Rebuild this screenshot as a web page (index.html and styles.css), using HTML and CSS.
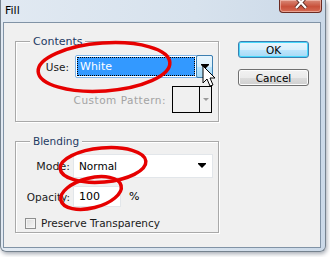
FILE: index.html
```html
<!DOCTYPE html>
<html>
<head>
<meta charset="utf-8">
<link rel="stylesheet" href="styles.css">
</head>
<body>
<div class="frame">
  <div class="titlebar">
    <span class="title">Fill</span>
    <div class="close">
      <svg width="14" height="10" viewBox="0 0 14 10"><path d="M2 -3 L12 8 M12 -3 L2 8" stroke="#5a2a22" stroke-width="4"/><path d="M2 -3 L12 8 M12 -3 L2 8" stroke="#fff" stroke-width="2.2"/></svg>
    </div>
  </div>
  <div class="client">
    <div class="groups">
      <div class="group contents">
        <div class="group-title">Contents</div>
        <div class="row use-row">
          <span class="label">Use:</span>
          <div class="combo focused">
            <div class="combo-value selected"><span>White</span></div>
            <div class="combo-btn"><span class="arrow"></span></div>
          </div>
        </div>
        <div class="row pattern-row">
          <span class="label disabled">Custom Pattern:</span>
          <div class="pattern">
            <div class="pattern-swatch"></div>
            <div class="pattern-btn"><span class="arrow small"></span></div>
          </div>
        </div>
      </div>
      <div class="group blending">
        <div class="group-title">Blending</div>
        <div class="row mode-row">
          <span class="label">Mode:</span>
          <div class="combo plain">
            <div class="combo-value"><span>Normal</span></div>
            <span class="arrow"></span>
          </div>
        </div>
        <div class="row opacity-row">
          <span class="label">Opacity:</span>
          <div class="input">100</div>
          <span class="pct">%</span>
        </div>
        <div class="row check-row">
          <span class="checkbox"></span>
          <span class="check-label">Preserve Transparency</span>
        </div>
      </div>
    </div>
    <div class="buttons">
      <div class="btn default">OK</div>
      <div class="btn">Cancel</div>
    </div>
  </div>
</div>
<svg class="marks" width="330" height="257" viewBox="0 0 330 257">
  <ellipse cx="104" cy="67" rx="66" ry="24" transform="rotate(-4 104 67)" fill="none" stroke="#e60000" stroke-width="3.5"/>
  <ellipse cx="103" cy="165" rx="43" ry="17" transform="rotate(-5 103 165)" fill="none" stroke="#e60000" stroke-width="3.5"/>
  <ellipse cx="91" cy="193" rx="31" ry="15" transform="rotate(-14 91 193)" fill="none" stroke="#e60000" stroke-width="3.5"/>
  <path d="M203 66 L203 83 L207 79 L210 86 L213 85 L210 78 L215 78 Z" fill="#fff" stroke="#000" stroke-width="1" stroke-linejoin="round"/>
</svg>
</body>
</html>
```
FILE: styles.css
```css
* { box-sizing: border-box; }
html, body { margin: 0; padding: 0; }
body {
  width: 330px;
  height: 257px;
  background: #ffffff;
  font-family: "DejaVu Sans", Verdana, sans-serif;
  font-size: 10.5px;
  color: #000;
  position: relative;
  overflow: hidden;
}
.frame {
  width: 326px;
  height: 252px;
  background: linear-gradient(90deg, #e1e9f2 0%, #d7e2ed 60%, #cbd9e8 100%);
  border: 1px solid #76838f;
  border-top: none;
  border-radius: 0 0 6px 6px;
  box-shadow: 1px 2px 4px rgba(60, 70, 90, 0.45);
}
.titlebar {
  height: 22px;
  position: relative;
  display: flex;
  align-items: center;
  padding-left: 4px;
}
.title {
  font-size: 11px;
  color: #000;
  margin-top: -2px;
}
.close {
  position: absolute;
  left: 278px;
  top: 0;
  width: 43px;
  height: 13px;
  border: 1px solid #6b2b22;
  border-top: none;
  border-radius: 0 0 4px 4px;
  background: linear-gradient(#d98a78 0%, #c8503a 55%, #d66c55 100%);
  box-shadow: inset 0 0 0 1px rgba(255, 220, 210, 0.5);
  display: flex;
  justify-content: center;
  align-items: flex-start;
}
.client {
  margin-left: 2px;
  width: 318px;
  height: 226px;
  border: 1px solid #8193a6;
  background: #f0f0f0;
  display: flex;
}
.groups {
  padding-left: 11px;
  padding-top: 18px;
  width: 215px;
}
.group {
  border: 1px solid #a9a9a9;
  box-shadow: inset 1px 1px 0 #fff, 1px 1px 0 #fff;
  width: 204px;
}
.group-title {
  display: table;
  margin: -7px 0 0 14px;
  padding: 0 3px;
  background: #f0f0f0;
  line-height: 13px;
  color: #1e3a64;
  font-size: 11px;
}
.blending .group-title { font-size: 10.5px; }
.contents { height: 81px; }
.blending { height: 92px; margin-top: 19px; }
.row { display: flex; align-items: center; }
.label {
  text-align: right;
  color: #1a1a1a;
  white-space: nowrap;
}
.disabled { color: #a3a3a3; letter-spacing: 0.5px; }
.use-row { margin-top: 7px; }
.use-row .label { width: 53px; margin-right: 6px; }
.combo {
  height: 23px;
  display: flex;
  align-items: stretch;
}
.combo.focused {
  width: 138px;
  border: 1px solid #7eb4ea;
  border-radius: 2px;
  background: #fff;
  padding: 1px;
}
.combo-value {
  flex: 1;
  display: flex;
  align-items: center;
}
.combo-value.selected {
  background: #3399ff;
  color: #fff;
  outline: 1px dotted #000;
  outline-offset: -1px;
  margin-right: 1px;
  font-size: 11px;
}
.combo-value span { padding-left: 3px; }
.combo-btn {
  width: 17px;
  margin: -2px -2px -2px 0;
  border: 1px solid #3c7fb1;
  border-radius: 2px;
  background: linear-gradient(#eaf6fd 0%, #d9f0fc 50%, #bee6fd 51%, #a7d9f5 100%);
  display: flex;
  align-items: center;
  justify-content: center;
}
.arrow {
  width: 0;
  height: 0;
  border-left: 4px solid transparent;
  border-right: 4px solid transparent;
  border-top: 4px solid #000;
  position: relative;
}
.arrow::before {
  content: "";
  position: absolute;
  left: -4px;
  top: -5px;
  width: 8px;
  height: 1px;
  background: #000;
}
.arrow.small {
  border-left-width: 3px;
  border-right-width: 3px;
  border-top: 3px solid #9a9a9a;
}
.arrow.small::before { display: none; }
.pattern-row {
  margin-top: 8px;
  justify-content: flex-end;
  padding-right: 6px;
}
.pattern-row .label { margin-right: 6px; }
.pattern {
  width: 40px;
  height: 27px;
  border: 1px solid #000;
  background: #f0f0f0;
  display: flex;
}
.pattern-swatch { flex: 1; border-right: 1px solid #000; }
.pattern-btn {
  width: 11px;
  display: flex;
  justify-content: center;
  align-items: center;
}
.mode-row { margin-top: 6px; }
.mode-row .label, .opacity-row .label { width: 54px; margin-right: 3px; }
.mode-row .label { font-size: 11px; }
.combo.plain {
  width: 140px;
  height: 24px;
  background: #fff;
  border: 1px solid #e2e6ea;
  align-items: center;
  padding-right: 6px;
  font-size: 10.5px;
}
.combo.plain .combo-value span { padding-left: 5px; }
.opacity-row { margin-top: 8px; }
.input {
  width: 48px;
  height: 21px;
  background: #fff;
  border: 1px solid #e2e6ea;
  padding-left: 5px;
  line-height: 19px;
  font-size: 11px;
}
.pct { margin-left: 8px; font-size: 11px; }
.check-row { margin-top: 10px; margin-left: 9px; }
.checkbox {
  width: 11px;
  height: 11px;
  border: 1px solid #8e8f8f;
  background: linear-gradient(135deg, #dcdcdc, #f6f6f6);
  box-shadow: inset 0 0 0 1px #f4f4f4;
  margin-right: 5px;
}
.check-label { color: #1a1a1a; }
.buttons {
  padding-top: 18px;
  padding-left: 19px;
  display: flex;
  flex-direction: column;
  gap: 11px;
}
.btn {
  width: 71px;
  height: 17px;
  border: 1px solid #707070;
  border-radius: 3px;
  background: linear-gradient(#f2f2f2 0%, #ebebeb 50%, #dddddd 51%, #cfcfcf 100%);
  box-shadow: inset 0 0 0 1px #fcfcfc;
  display: flex;
  align-items: center;
  justify-content: center;
  color: #000;
}
.btn.default {
  border-color: #3c7fb1;
  box-shadow: inset 0 0 0 1px #48d8fb;
  background: linear-gradient(#eaf6fd 0%, #d9f0fc 50%, #bee6fd 51%, #a7d9f5 100%);
}
.marks {
  position: absolute;
  left: 0;
  top: 0;
  pointer-events: none;
}
```
